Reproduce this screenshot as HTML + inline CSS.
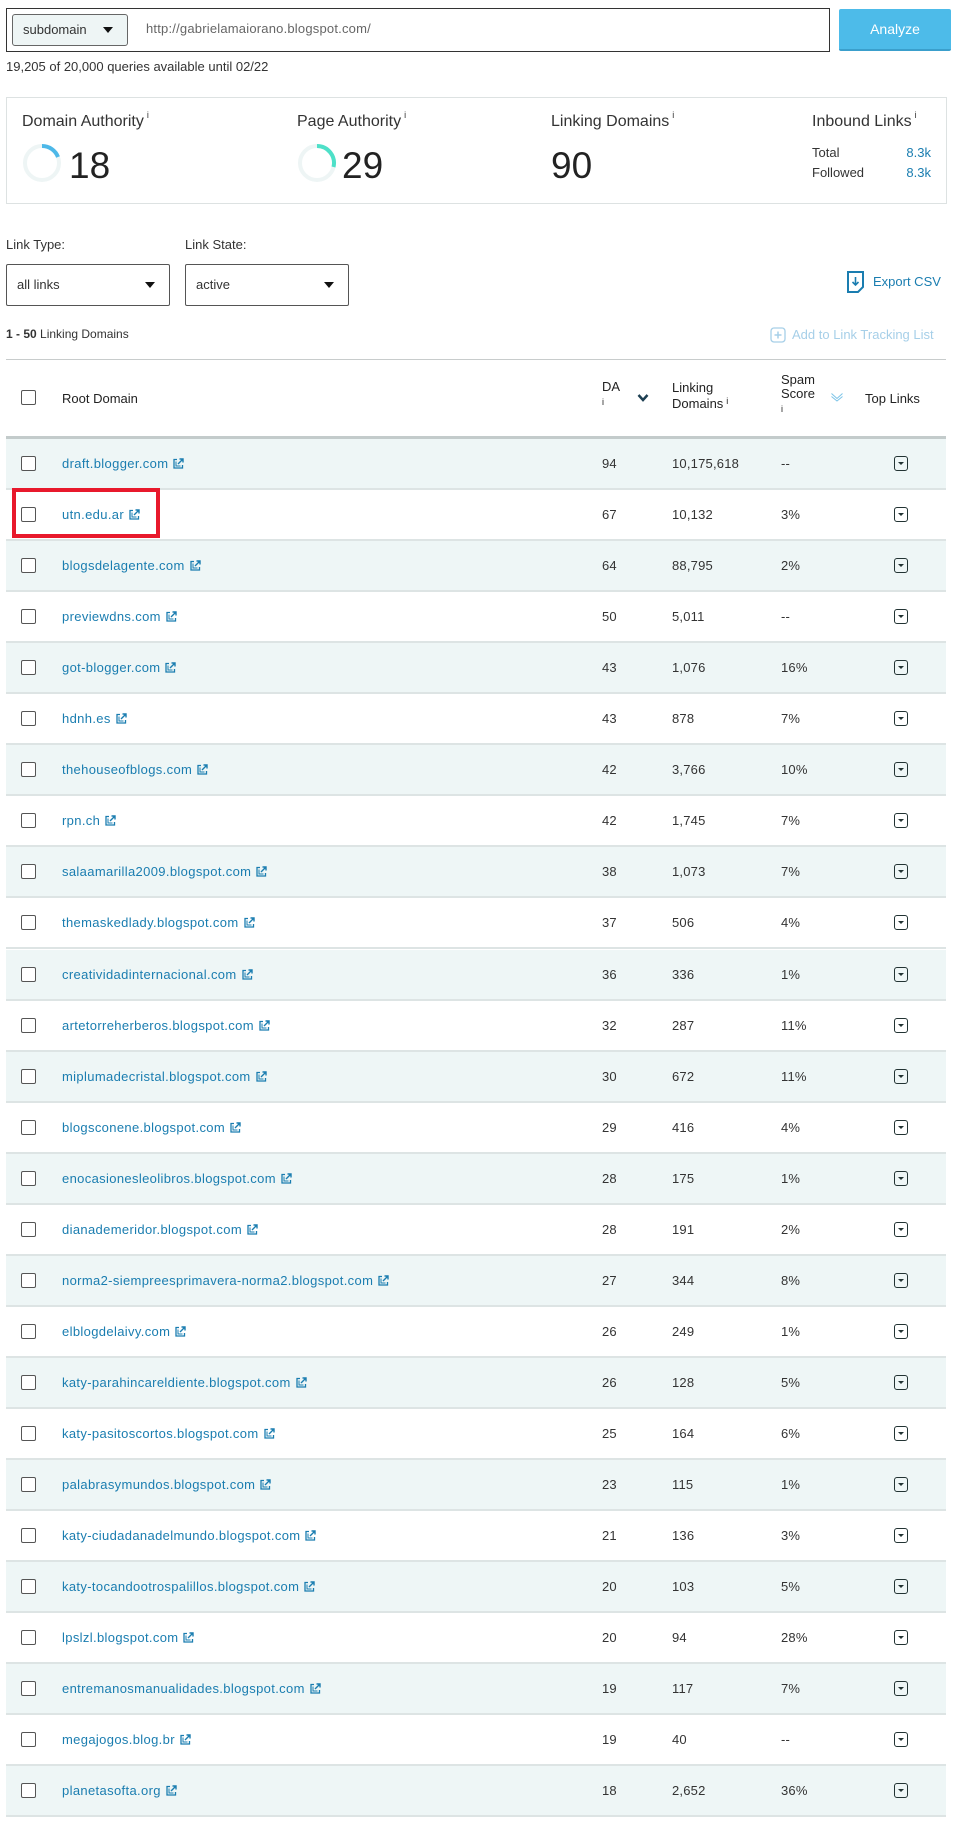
<!DOCTYPE html>
<html><head><meta charset="utf-8"><style>
*{box-sizing:border-box;margin:0;padding:0}
body{width:957px;height:1825px;background:#fff;font-family:"Liberation Sans",Arial,sans-serif;color:#333;position:relative;overflow:hidden}
.a{position:absolute;white-space:nowrap}
.lbl{font-size:16px;color:#333}
.big{font-size:37px;color:#222;line-height:1}
sup{font-size:9px;vertical-align:top;position:relative;top:-3px;margin-left:3px}
.sel{border:1px solid #555;border-radius:2px;background:#fff;font-size:13px;color:#333}
.tri{position:absolute;width:0;height:0;border-left:5px solid transparent;border-right:5px solid transparent;border-top:6px solid #111}
.row{position:absolute;left:6px;width:940px;height:51px;border-bottom:2px solid #dde4e4}
.row.o{background:#eef6f6}
.cb{position:absolute;left:15px;top:17px;width:15px;height:15px;border:1px solid #555;border-radius:2px;background:#fff}
.row .d{position:absolute;left:56px;top:17px;font-size:13px;color:#1a7db0;letter-spacing:0.35px}
.row .n{position:absolute;top:17px;font-size:13px;color:#333;letter-spacing:0.2px}
.ext{display:inline-block;width:11px;height:11px;margin-left:5px;vertical-align:-1px}
.tl{position:absolute;left:888px;top:17px;width:14px;height:15px;border:1.5px solid #233;border-radius:3px}
.tl:after{content:"";position:absolute;left:3px;top:5px;border-left:3px solid transparent;border-right:3px solid transparent;border-top:3px solid #233}
</style></head><body>
<div class="a" style="left:6px;top:8px;width:824px;height:44px;border:1px solid #333"></div>
<div class="a" style="left:12px;top:14px;width:116px;height:32px;border:1px solid #666;border-radius:3px;background:#eef5f5;font-size:13px;line-height:30px;padding-left:10px;color:#333">subdomain<span class="tri" style="left:90px;top:12px"></span></div>
<div class="a" style="left:146px;top:21px;font-size:13px;color:#666;letter-spacing:0.2px">http://gabrielamaiorano.blogspot.com/</div>
<div class="a" style="left:839px;top:9px;width:112px;height:42px;background:#4dbbe9;border-radius:2px;border-bottom:2px solid #3a9fcc;color:#fff;font-size:14px;text-align:center;line-height:40px">Analyze</div>
<div class="a" style="left:6px;top:59px;font-size:13px;color:#333">19,205 of 20,000 queries available until 02/22</div>

<div class="a" style="left:6px;top:97px;width:941px;height:107px;border:1px solid #dde2e2"></div>
<div class="a lbl" style="left:22px;top:113px">Domain Authority<sup>i</sup></div>
<svg class="a" style="left:22px;top:143px" width="40" height="40"><circle cx="20" cy="20" r="17" fill="none" stroke="#eef5f5" stroke-width="4"/><path d="M20 3 A17 17 0 0 1 36 14" fill="none" stroke="#4db8e8" stroke-width="4"/></svg>
<div class="a big" style="left:69px;top:147px">18</div>
<div class="a lbl" style="left:297px;top:113px">Page Authority<sup>i</sup></div>
<svg class="a" style="left:297px;top:143px" width="40" height="40"><circle cx="20" cy="20" r="17" fill="none" stroke="#eef5f5" stroke-width="4"/><path d="M20 3 A17 17 0 0 1 36.5 24" fill="none" stroke="#4ee0c8" stroke-width="4"/></svg>
<div class="a big" style="left:342px;top:147px">29</div>
<div class="a lbl" style="left:551px;top:113px">Linking Domains<sup>i</sup></div>
<div class="a big" style="left:551px;top:147px">90</div>
<div class="a lbl" style="left:812px;top:113px">Inbound Links<sup>i</sup></div>
<div class="a" style="left:812px;top:145px;font-size:13px">Total</div>
<div class="a" style="left:812px;top:165px;font-size:13px">Followed</div>
<div class="a" style="left:895px;top:145px;font-size:13px;color:#1a7db0;width:36px;text-align:right">8.3k</div>
<div class="a" style="left:895px;top:165px;font-size:13px;color:#1a7db0;width:36px;text-align:right">8.3k</div>

<div class="a" style="left:6px;top:237px;font-size:13px">Link Type:</div>
<div class="a" style="left:185px;top:237px;font-size:13px">Link State:</div>
<div class="a sel" style="left:6px;top:264px;width:164px;height:42px;line-height:40px;padding-left:10px">all links<span class="tri" style="left:138px;top:17px"></span></div>
<div class="a sel" style="left:185px;top:264px;width:164px;height:42px;line-height:40px;padding-left:10px">active<span class="tri" style="left:138px;top:17px"></span></div>
<svg class="a" style="left:846px;top:270px" width="20" height="24"><path d="M2 2H17V17L12 22H2Z" fill="none" stroke="#1a7db0" stroke-width="2"/><path d="M9.5 7V15M6.5 12L9.5 15L12.5 12" fill="none" stroke="#1a7db0" stroke-width="1.6"/></svg>
<div class="a" style="left:873px;top:274px;font-size:13px;color:#1a7db0">Export CSV</div>
<div class="a" style="left:6px;top:327px;font-size:12px;color:#333"><b>1 - 50</b> Linking Domains</div>
<svg class="a" style="left:770px;top:327px" width="16" height="16"><rect x="1" y="1" width="14" height="14" rx="3" fill="none" stroke="#a6cfe8" stroke-width="1.3"/><path d="M8 4.5V11.5M4.5 8H11.5" stroke="#a6cfe8" stroke-width="1.5"/></svg>
<div class="a" style="left:792px;top:327px;font-size:13px;color:#a6cfe8">Add to Link Tracking List</div>
<div class="a" style="left:6px;top:359px;width:940px;height:1px;background:#c8cccc"></div>

<div class="a cb" style="left:21px;top:390px"></div>
<div class="a" style="left:62px;top:391px;font-size:13px;color:#222">Root Domain</div>
<div class="a" style="left:602px;top:380px;font-size:13px;color:#222;line-height:14px">DA<br><span style="font-size:9px">i</span></div>
<svg class="a" style="left:637px;top:393px" width="12" height="10"><path d="M1.5 2L6 7L10.5 2" fill="none" stroke="#1d3f52" stroke-width="2.5"/></svg>
<div class="a" style="left:672px;top:380px;font-size:13px;color:#222;line-height:16px">Linking<br>Domains<sup>i</sup></div>
<div class="a" style="left:781px;top:373px;font-size:13px;color:#222;line-height:14px">Spam<br>Score<br><span style="font-size:9px">i</span></div>
<svg class="a" style="left:830px;top:392px" width="14" height="10"><path d="M1.5 1.5L7 6.5L12.5 1.5M1.5 4.5L7 9L12.5 4.5" fill="none" stroke="#7cc4e8" stroke-width="1"/></svg>
<div class="a" style="left:865px;top:391px;font-size:13px;color:#222">Top Links</div>
<div class="a" style="left:6px;top:436px;width:940px;height:3px;background:#c3cbcb"></div>

<div id="rows"></div>
<div class="a" style="left:12px;top:488px;width:148px;height:50px;border:4px solid #e8192c;z-index:5"></div>
<script>
var d=[["draft.blogger.com",94,"10,175,618","--"],["utn.edu.ar",67,"10,132","3%"],["blogsdelagente.com",64,"88,795","2%"],["previewdns.com",50,"5,011","--"],["got-blogger.com",43,"1,076","16%"],["hdnh.es",43,"878","7%"],["thehouseofblogs.com",42,"3,766","10%"],["rpn.ch",42,"1,745","7%"],["salaamarilla2009.blogspot.com",38,"1,073","7%"],["themaskedlady.blogspot.com",37,"506","4%"],["creatividadinternacional.com",36,"336","1%"],["artetorreherberos.blogspot.com",32,"287","11%"],["miplumadecristal.blogspot.com",30,"672","11%"],["blogsconene.blogspot.com",29,"416","4%"],["enocasionesleolibros.blogspot.com",28,"175","1%"],["dianademeridor.blogspot.com",28,"191","2%"],["norma2-siempreesprimavera-norma2.blogspot.com",27,"344","8%"],["elblogdelaivy.com",26,"249","1%"],["katy-parahincareldiente.blogspot.com",26,"128","5%"],["katy-pasitoscortos.blogspot.com",25,"164","6%"],["palabrasymundos.blogspot.com",23,"115","1%"],["katy-ciudadanadelmundo.blogspot.com",21,"136","3%"],["katy-tocandootrospalillos.blogspot.com",20,"103","5%"],["lpslzl.blogspot.com",20,"94","28%"],["entremanosmanualidades.blogspot.com",19,"117","7%"],["megajogos.blog.br",19,"40","--"],["planetasofta.org",18,"2,652","36%"]];
var ext='<svg class="ext" viewBox="0 0 11 11"><path d="M4 1.5H1V10H9.5V7" fill="none" stroke="#1a7db0" stroke-width="1.3"/><path d="M3 3.5V8H7.5" fill="none" stroke="#1a7db0" stroke-width="1"/><path d="M5 6L10 1M6.5 1H10V4.5" fill="none" stroke="#1a7db0" stroke-width="1.4"/></svg>';
var h='';for(var i=0;i<d.length;i++){var t=439+i*51.05;h+='<div class="row'+(i%2==0?' o':'')+'" style="top:'+t+'px"><div class="cb"></div><div class="d">'+d[i][0]+ext+'</div><div class="n" style="left:596px">'+d[i][1]+'</div><div class="n" style="left:666px">'+d[i][2]+'</div><div class="n" style="left:775px">'+d[i][3]+'</div><div class="tl"></div></div>';}
document.getElementById('rows').innerHTML=h;
</script>
</body></html>
